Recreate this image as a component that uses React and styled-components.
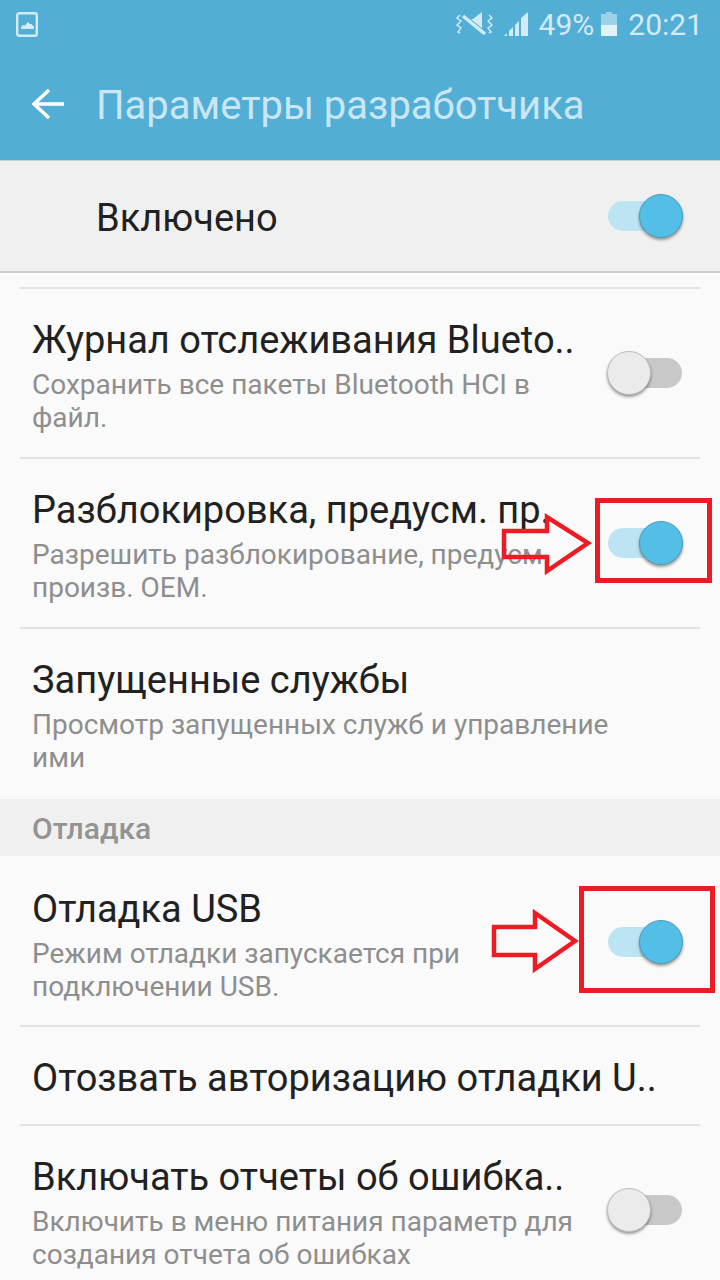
import styled, { createGlobalStyle } from 'styled-components';

const GlobalStyle = createGlobalStyle`
  html, body {
    margin: 0;
    padding: 0;
    background: #fafafa;
    font-family: Roboto, "Noto Sans", sans-serif;
  }
`;

const Page = styled.div`
  position: relative;
  width: 720px;
  height: 1280px;
  overflow: hidden;
  background: #fafafa;
`;

const Header = styled.header`
  height: 160px;
  background: #53aed5;
  display: flex;
  flex-direction: column;
`;

const StatusBar = styled.div`
  height: 50px;
  display: flex;
  align-items: center;
  padding: 0 17px 2px 16px;
  box-sizing: border-box;
  color: #d3ebf6;
  font-size: 30px;
`;

const StatusRight = styled.div`
  margin-left: auto;
  display: flex;
  align-items: center;
`;

const StatusText = styled.span`
  display: flex;
  margin-left: ${(p) => p.$gap}px;
`;

const ActionBar = styled.div`
  flex: 1;
  display: flex;
  align-items: center;
  padding: 0 0 2px 32px;
`;

const Title = styled.h1`
  margin: 2px 0 0 32px;
  font-size: 40px;
  font-weight: 400;
  color: #c9e6f3;
`;

const MasterRow = styled.div`
  height: 113px;
  box-sizing: border-box;
  display: flex;
  align-items: center;
  justify-content: space-between;
  padding: 0 20px 0 96px;
  background: #f0f0f0;
  border-top: 1px solid #c4d0d5;
  border-bottom: 2px solid #cfcfcf;
  font-size: 38px;
  color: #212121;
`;

const MasterLabel = styled.span`
  margin-top: 3px;
`;

const List = styled.div`
  padding-top: 14px;
`;

const Row = styled.div`
  height: ${(p) => p.$height}px;
  box-sizing: border-box;
  display: flex;
  align-items: center;
  justify-content: space-between;
  margin: 0 20px;
  padding-left: 12px;
  border-top: 2px solid ${(p) => (p.$noLine ? 'transparent' : '#e3e3e3')};
`;

const RowText = styled.div`
  width: 578px;
  padding-top: 5px;
`;

const RowTitle = styled.div`
  font-size: 38px;
  line-height: 46px;
  color: #212121;
  white-space: nowrap;
`;

const RowSub = styled.div`
  font-size: 28px;
  line-height: 33px;
  margin-top: 5px;
  color: #8e8e8e;
`;

const SectionHeader = styled.div`
  height: 57px;
  box-sizing: border-box;
  margin-top: 2px;
  padding: 2px 0 0 32px;
  display: flex;
  align-items: center;
  background: #f0f0f0;
  color: #939393;
  font-size: 30px;
  font-weight: 500;
`;

const Toggle = styled.div`
  position: relative;
  width: 76px;
  height: 44px;
  flex-shrink: 0;
  margin-right: 17px;
`;

const Track = styled.div`
  position: absolute;
  left: 1px;
  right: 1px;
  top: 7px;
  height: 30px;
  border-radius: 15px;
  background: ${(p) => (p.$on ? '#bde4f3' : '#c8c8c8')};
`;

const Knob = styled.div`
  position: absolute;
  top: 0;
  left: ${(p) => (p.$on ? '32px' : '0')};
  width: 44px;
  height: 44px;
  box-sizing: border-box;
  border-radius: 50%;
  background: ${(p) => (p.$on ? '#54bfe6' : '#ebebeb')};
  border: 1px solid ${(p) => (p.$on ? '#4a9dbb' : '#bdbdbd')};
  box-shadow: 0 2px 3px rgba(0, 0, 0, 0.4);
`;

const MarkBox = styled.div`
  position: absolute;
  left: ${(p) => p.$x}px;
  top: ${(p) => p.$y}px;
  width: ${(p) => p.$w}px;
  height: ${(p) => p.$h}px;
  box-sizing: border-box;
  border: 5px solid #ed1c24;
`;

const MarkArrow = styled.svg`
  position: absolute;
  left: 0;
  top: 0;
  pointer-events: none;
`;

function Switch({ on }) {
  return (
    <Toggle>
      <Track $on={on} />
      <Knob $on={on} />
    </Toggle>
  );
}

function Item({ title, sub, on, height = 170, noLine }) {
  return (
    <Row $height={height} $noLine={noLine}>
      <RowText>
        <RowTitle>{title}</RowTitle>
        {sub && <RowSub>{sub}</RowSub>}
      </RowText>
      {on !== undefined && <Switch on={on} />}
    </Row>
  );
}

function PictureIcon() {
  return (
    <svg width="22" height="25" viewBox="0 0 22 25">
      <rect x="1.2" y="1.2" width="19.6" height="22.6" rx="2" fill="none" stroke="#d3ebf6" strokeWidth="2.4" />
      <path d="M5 17v-2l2-2 2 .5L12 10l2 2 1.500 0L18 15v2z" fill="#d3ebf6" />
    </svg>
  );
}

function MuteIcon() {
  return (
    <svg width="37" height="24" viewBox="0 0 37 24">
      <path d="M13 7h4l9-7v21z" fill="#d3ebf6" />
      <path d="M6 3l24 20" stroke="#53aed5" strokeWidth="5" />
      <path d="M7 4l22 18" stroke="#d3ebf6" strokeWidth="3.500" />
      <path d="M4 3L1 6l4 3-4 4 4 3-3 4 2 1M33 3l3 3-4 3 4 4-4 3 3 4-2 1" fill="none" stroke="#d3ebf6" strokeWidth="1.400" />
    </svg>
  );
}

function SignalIcon() {
  return (
    <svg width="24" height="24" viewBox="0 0 24 24">
      <path d="M0 24h3v-3zM5 24h4v-9l-4 4zM11 24h4V9l-4 4zM17 24h7V0l-7 6z" fill="#d3ebf6" />
    </svg>
  );
}

function BatteryIcon() {
  return (
    <svg width="16" height="24" viewBox="0 0 16 24">
      <path d="M5 0h6v2h5v22H0V2h5z" fill="#9bd2e8" />
      <rect y="13" width="16" height="11" fill="#e2f2f9" />
    </svg>
  );
}

function BackIcon() {
  return (
    <svg width="32" height="32" viewBox="0 0 32 32">
      <path d="M32 16H2M17 2L2 16l15 14" fill="none" stroke="#fff" strokeWidth="3.500" />
    </svg>
  );
}

export default function App() {
  return (
    <Page>
      <GlobalStyle />
      <Header>
        <StatusBar>
          <PictureIcon />
          <StatusRight>
            <MuteIcon />
            <StatusText $gap={11}>
              <SignalIcon />
            </StatusText>
            <StatusText $gap={11}>49%</StatusText>
            <StatusText $gap={7}>
              <BatteryIcon />
            </StatusText>
            <StatusText $gap={11}>20:21</StatusText>
          </StatusRight>
        </StatusBar>
        <ActionBar>
          <BackIcon />
          <Title>Параметры разработчика</Title>
        </ActionBar>
      </Header>
      <MasterRow>
        <MasterLabel>Включено</MasterLabel>
        <Switch on />
      </MasterRow>
      <List>
        <Item
          title="Журнал отслеживания Blueto.."
          sub="Сохранить все пакеты Bluetooth HCI в файл."
          on={false}
        />
        <Item
          title="Разблокировка, предусм. пр."
          sub="Разрешить разблокирование, предусм. произв. OEM."
          on
        />
        <Item title="Запущенные службы" sub="Просмотр запущенных служб и управление ими" />
        <SectionHeader>Отладка</SectionHeader>
        <Item
          title="Отладка USB"
          sub="Режим отладки запускается при подключении USB."
          on
          noLine
          height={169}
        />
        <Item title="Отозвать авторизацию отладки U.." height={99} />
        <Item
          title="Включать отчеты об ошибка.."
          sub="Включить в меню питания параметр для создания отчета об ошибках"
          on={false}
        />
      </List>
      <MarkBox $x={595} $y={498} $w={117} $h={85} />
      <MarkBox $x={579} $y={886} $w={136} $h={107} />
      <MarkArrow width="720" height="1280" viewBox="0 0 720 1280">
        <path d="M504 531h43v-14l41 26-41 28v-14h-43z" fill="none" stroke="#ed1c24" strokeWidth="4.500" />
        <path d="M494 927h41v-14l40 28-40 28v-14h-41z" fill="none" stroke="#ed1c24" strokeWidth="4.500" />
      </MarkArrow>
    </Page>
  );
}
